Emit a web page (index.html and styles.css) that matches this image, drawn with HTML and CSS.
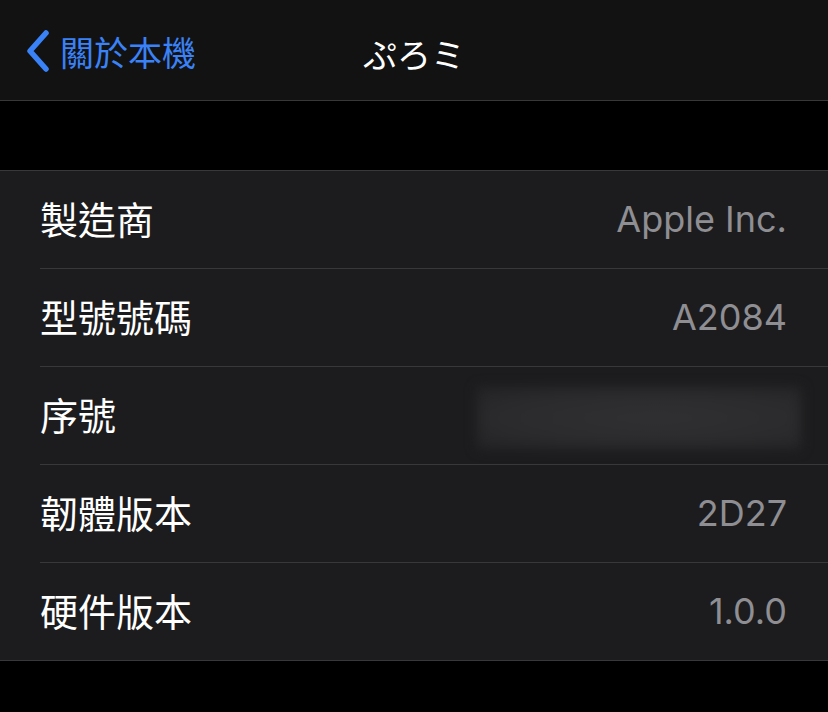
FILE: index.html
```html
<!DOCTYPE html>
<html lang="zh-Hant">
<head>
<meta charset="utf-8">
<link rel="stylesheet" href="styles.css">
</head>
<body>
<header class="nav">
  <div class="back">
    <svg class="chev" width="26" height="42" viewBox="0 0 26 42"><path d="M21 3 L5 21 L21 39" fill="none" stroke="#3a82f7" stroke-width="5.5" stroke-linecap="round" stroke-linejoin="round"/></svg>
    <span class="back-label">關於本機</span>
  </div>
  <div class="title">ぷろミ</div>
</header>
<div class="gap"></div>
<section class="group">
  <div class="row"><span class="label">製造商</span><span class="value">Apple Inc.</span></div>
  <div class="row"><span class="label">型號號碼</span><span class="value">A2084</span></div>
  <div class="row"><span class="label">序號</span><span class="value blurred"><span class="blurbox"></span></span></div>
  <div class="row"><span class="label">韌體版本</span><span class="value">2D27</span></div>
  <div class="row last"><span class="label">硬件版本</span><span class="value">1.0.0</span></div>
</section>
</body>
</html>
```
FILE: styles.css
```css
html, body {
  margin: 0;
  padding: 0;
  background: #000;
  width: 828px;
  height: 712px;
  overflow: hidden;
  font-family: Inter, "Noto Sans CJK TC", sans-serif;
}
.nav {
  height: 100px;
  background: #121212;
  border-bottom: 1px solid #38383a;
  display: flex;
  align-items: center;
  position: relative;
}
.back {
  display: flex;
  align-items: center;
  padding-left: 25px;
  gap: 9px;
  color: #3a82f7;
  font-size: 34px;
  font-family: "Noto Sans CJK TC", sans-serif;
  margin-top: 4px;
}
.back-label { line-height: 50px; }
.chev { display: block; margin-top: -2px; }
.title {
  position: absolute;
  left: 0;
  right: 0;
  top: 29px;
  text-align: center;
  color: #fff;
  font-size: 34px;
  line-height: 50px;
  font-weight: 400;
  pointer-events: none;
  font-family: "Noto Sans CJK JP", sans-serif;
}
.gap { height: 69px; }
.group {
  background: #1c1c1e;
  border-top: 1px solid #38383a;
  border-bottom: 1px solid #38383a;
  padding-left: 40px;
}
.row {
  height: 97px;
  display: flex;
  align-items: center;
  justify-content: space-between;
  padding-right: 41px;
  border-bottom: 1px solid #38383a;
}
.row.last { border-bottom: none; }
.label {
  color: #fff;
  font-size: 38px;
  line-height: 50px;
  margin-top: -3px;
  font-family: "Noto Sans CJK TC", sans-serif;
}
.value {
  color: #8e8e93;
  font-size: 36px;
  line-height: 50px;
  margin-top: -2px;
}
.blurred { position: relative; width: 300px; height: 60px; }
.blurbox {
  position: absolute;
  left: -10px;
  right: -14px;
  top: 2px;
  bottom: -4px;
  background: radial-gradient(ellipse at 55% 50%, #303033 0%, #2b2b2d 60%, #242426 100%);
  filter: blur(6px);
}
```
